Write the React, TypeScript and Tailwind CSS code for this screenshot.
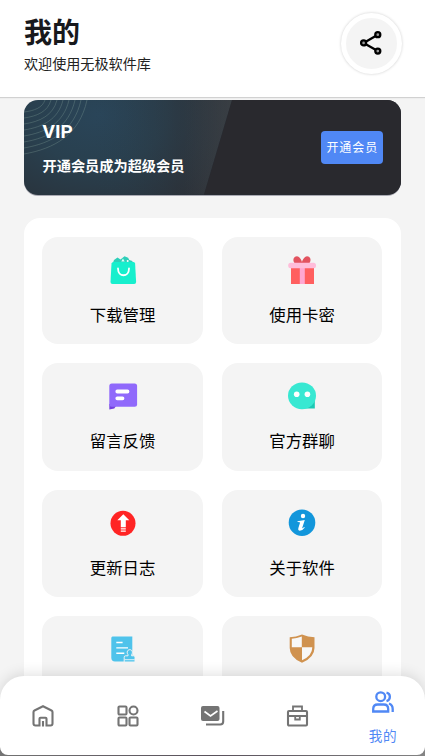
import type { ReactNode } from "react";

type TileProps = {
  label: string;
  children: ReactNode;
};

function Tile({ label, children }: TileProps) {
  return (
    <div className="flex h-[107.5px] flex-col items-center rounded-[16px] bg-[#f4f4f4] pt-[13.3px]">
      <svg className="size-10 shrink-0" viewBox="0 0 40 40" fill="none">
        {children}
      </svg>
      <span className="mt-[11.7px] text-[16.4px] leading-6 text-black">{label}</span>
    </div>
  );
}

type NavItemProps = {
  label?: string;
  children: ReactNode;
};

function NavItem({ label, children }: NavItemProps) {
  return (
    <div
      className={
        label
          ? "flex flex-1 flex-col items-center justify-center pt-[4px] text-[#5088f5]"
          : "flex flex-1 flex-col items-center justify-center text-[#747474]"
      }
    >
      <svg className="size-6" viewBox="0 0 24 24" fill="none" stroke="currentColor" strokeWidth={label ? 2.3 : 2.1}>
        {children}
      </svg>
      {label && <span className="mt-[11px] pl-px text-[13.6px] leading-5 tracking-[0.6px]">{label}</span>}
    </div>
  );
}

// left edge / top edge intercepts of the decorative rings
const rings = [
  [54, 63],
  [48, 57],
  [42, 51],
  [36, 45],
  [30, 39],
  [24, 33],
  [18, 27],
  [12, 21],
];

function VipCard() {
  return (
    <div className="relative flex h-[94.5px] items-center justify-between overflow-hidden rounded-[14px] bg-[#29292e] bg-[radial-gradient(ellipse_170px_120px_at_75px_15px,#2a4559_0%,#29404f_40%,#292e35_100%)] pr-[18.5px] pl-[18.5px] shadow-[0_1px_0_#aaaab3]">
      <svg className="absolute inset-0 h-full w-full" viewBox="0 0 377 94.5" preserveAspectRatio="none" fill="none">
        <defs>
          <linearGradient id="base" x1="0" x2="1">
            <stop offset="0" stopColor="#29404f" stopOpacity="0" />
            <stop offset="0.6" stopColor="#303035" stopOpacity="0.7" />
            <stop offset="1" stopColor="#38393d" />
          </linearGradient>
          <linearGradient id="fold" x1="0" x2="1">
            <stop offset="0" stopColor="#3c4045" stopOpacity="0" />
            <stop offset="1" stopColor="#3f4347" />
          </linearGradient>
        </defs>
        <path d="M70 0H208L180 94.5H70z" fill="url(#base)" opacity="0.5" />
        <path d="M160 0H208L180 94.5H160z" fill="url(#fold)" opacity="0.6" />
        <path d="M208 0H377V94.5H180z" fill="#29292e" />
        {rings.map(([y, x]) => (
          <path
            key={y}
            d={`M0 ${y}C${x * 0.48} ${y * 0.9} ${x * 0.88} ${y * 0.65} ${x} 0`}
            stroke="#8caaa0"
            strokeOpacity="0.38"
            strokeWidth="0.8"
          />
        ))}
      </svg>
      <div className="relative pt-[3px] text-white">
        <div className="font-['Roboto',sans-serif] text-[19px] leading-6 font-bold">VIP</div>
        <div className="mt-[9px] text-[14.2px] leading-6 font-bold">开通会员成为超级会员</div>
      </div>
      <div className="relative flex h-[33px] w-[61.5px] items-center justify-center rounded-[4px] bg-[#5088f5] pl-px text-[12px] tracking-[0.9px] whitespace-nowrap text-white">
        开通会员
      </div>
    </div>
  );
}

export default function App() {
  return (
    <div className="relative flex h-[756px] w-[425px] flex-col overflow-hidden bg-[#f4f4f4] font-['Noto_Sans_CJK_SC',sans-serif]">
      <header className="flex h-[97px] shrink-0 justify-between bg-white pr-[23.500px] pl-6 shadow-[0_1px_1px_rgba(0,0,0,0.14)]">
        <div>
          <h1 className="mt-[11px] text-[28px] leading-10 font-bold text-[#18191c]">我的</h1>
          <p className="text-[14.1px] leading-6 text-[#222]">欢迎使用无极软件库</p>
        </div>
        <div className="mt-[12.500px] flex size-[61px] items-center justify-center rounded-full border-[5px] border-white bg-[#f4f4f4] shadow-[0_0_3px_rgba(0,0,0,0.2)]">
          <svg className="size-7" viewBox="0 0 28 28" fill="none" stroke="#000" strokeWidth="2.3">
            <path d="M20.8 5.7 6.6 13.9l14.2 8.2" />
            <circle cx="20.8" cy="5.7" r="2.5" fill="#999" />
            <circle cx="6.6" cy="13.9" r="2.5" fill="#999" />
            <circle cx="20.8" cy="22.1" r="2.5" fill="#999" />
          </svg>
        </div>
      </header>

      <main className="flex flex-1 flex-col px-6 pt-[3px]">
        <VipCard />
        <section className="mt-[23.5px] grid h-[560px] shrink-0 grid-cols-2 content-start gap-x-[19px] gap-y-[18.900px] rounded-[16px] bg-white pt-[18.800px] pr-[18.700px] pl-[18.300px]">
          <Tile label="下载管理">
            <path d="m9.500 14 1.500-4 3.500-2.500 3 2 4-3.200 3.600 1.500 1.200 2.200 3 1 1.200 4z" fill="#2dcfb9" />
            <path d="M10.500 12h20q1.500 0 1.600 1.500l1 18.500q0 2-2 2H9.500q-2 0-2-2l1-18.500Q8.700 12 10.500 12" fill="#17efcd" />
            <circle cx="24.700" cy="11" r="1" fill="#fff" />
            <path d="m18.300 11.500 1.700-3 1.700 3z" fill="#d9fff7" />
            <path d="M15 18.500c0 9 11 9 11 0" stroke="#fff" strokeWidth="1.800" strokeLinecap="round" />
          </Tile>
          <Tile label="使用卡密">
            <path d="M12.500 13c-3-4 1-8.300 4.400-6C19 8.500 20 12 20 12s1-3.500 3.100-5c3.400-2.300 7.400 2 4.400 6z" fill="#e2535f" />
            <path d="M9 17h23v17H9z" fill="#ff5f5f" />
            <path d="M17.800 17h5v17h-5z" fill="#ffa7d1" />
            <rect x="6.200" y="12.800" width="27.800" height="5.400" rx="2.500" fill="#ffbdda" />
          </Tile>
          <Tile label="留言反馈">
            <path d="M6.300 28h8l-3 4.500-5 1z" fill="#7341de" />
            <rect x="6.300" y="7.500" width="27.800" height="23.300" rx="2.500" fill="#9069fb" />
            <path d="M14.300 15.500h10.200M14.300 22.300h5.200" stroke="#fff" strokeWidth="3.800" strokeLinecap="round" />
          </Tile>
          <Tile label="官方群聊">
            <path d="M22 32.500h10.800V24z" fill="#1cc9b4" />
            <ellipse cx="20" cy="19.800" rx="14" ry="13.400" fill="#38e8d2" />
            <circle cx="14.700" cy="18.200" r="2.800" fill="#fff" />
            <circle cx="25.400" cy="18.200" r="2.800" fill="#fff" />
          </Tile>
          <Tile label="更新日志">
            <circle cx="20" cy="20.300" r="12.500" fill="#ff2424" />
            <path d="m20.300 11.200 6 6h-3.500v7h-5v-7h-3.500z" fill="#fff" />
            <path d="M17.800 25.800h5M17.800 28.200h5" stroke="#fff" strokeWidth="1.200" />
          </Tile>
          <Tile label="关于软件">
            <circle cx="20" cy="19.700" r="13.300" fill="#1296db" />
            <circle cx="21" cy="13" r="2.200" fill="#fff" />
            <path d="M15.500 18.300 22.800 17l-2.700 8.300q.8 0 2-1.300l.7.500q-2.300 3.300-5.200 3.200-2-.3-1.300-2.500l1.800-5.600q-.6-.6-2.600-.5z" fill="#fff" />
          </Tile>
          <Tile label="积分明细">
            <path d="M9.500 7.500h19.800v25H12q-3.700 0-3.700-3.700V9q0-1.500 1.200-1.500" fill="#4fc3eb" />
            <path d="M13.300 13.500h6.300M13.300 18.900H25M13.300 24.300h8" stroke="#fff" strokeWidth="1.400" />
            <path
              d="M25 26.800c.7-1.400-1-1.700-.8-3.600.2-3.400 5-3.400 5.200 0 .2 1.900-1.500 2.200-.8 3.600h2q1.400 0 1.400 1.400v4.800H21.200v-4.800q0-1.400 1.400-1.400z"
              fill="#4fc3eb"
              stroke="#f4f4f4"
            />
            <path d="M21.500 30.700h10.300" stroke="#d9f2fc" strokeWidth="1" />
          </Tile>
          <Tile label="隐私政策">
            <path d="M20 5.500q6 2.500 12.500 2.700V19q0 9.500-12.500 14.800Q7.700 28.500 7.700 19V8.200Q14 8 20 5.500" fill="#d0924f" />
            <path d="M19.800 7.500v10.700H9.800V9.800q5-.4 10-2.300M20 18.200h10.300q0 8.500-10.300 13z" fill="#f8f8f8" />
          </Tile>
        </section>
      </main>

      <div className="absolute inset-x-0 bottom-0 h-8 bg-linear-to-r from-[#777] via-[#5e5560] to-[#888]" />
      <nav className="absolute inset-x-0 bottom-[1px] flex h-[79px] rounded-t-[24px] rounded-b-[8px] bg-white shadow-[0_-2px_14px_rgba(0,0,0,0.12)]">
        <NavItem>
          <path d="M8.500 21.500H4.500q-2 0-2-2V8q0-1 1-1.500L12 2.200l8.500 4.300q1 .5 1 1.500v11.500q0 2-2 2h-4v-6.800q0-1-1-1H9.500q-1 0-1 1zM12 17v5.500" />
        </NavItem>
        <NavItem>
          <rect x="2.500" y="2.500" width="8" height="8" rx="1" />
          <circle cx="17.500" cy="6.500" r="4" />
          <rect x="2.500" y="13.500" width="8" height="8" rx="1" />
          <rect x="13.500" y="13.500" width="8" height="8" rx="1" />
        </NavItem>
        <NavItem>
          <rect x="0" y="2" width="18.500" height="15" rx="2" fill="currentColor" stroke="none" />
          <path d="m3.500 7.500 6 4.500 7-5" stroke="#fff" strokeWidth="1.700" />
          <path d="M22.200 7v10.500q0 3-3 3H5" />
        </NavItem>
        <NavItem>
          <rect x="2" y="7" width="19" height="14.500" rx="1" />
          <path d="M7 7V2.500h9V7M2 12h19M9.200 12v3.500h4.600V12" strokeWidth="1.800" />
        </NavItem>
        <NavItem label="我的">
          <circle cx="9.700" cy="6.700" r="4.400" />
          <path d="M2.200 21.500V19q0-4.500 4.500-4.500h6q4.500 0 4.500 4.500v2.500zM15.500 2.600c4.500 1 4.500 7.200 0 8.500M18 13.500q3.700 1.500 3.700 5.500v3" />
        </NavItem>
      </nav>
    </div>
  );
}
